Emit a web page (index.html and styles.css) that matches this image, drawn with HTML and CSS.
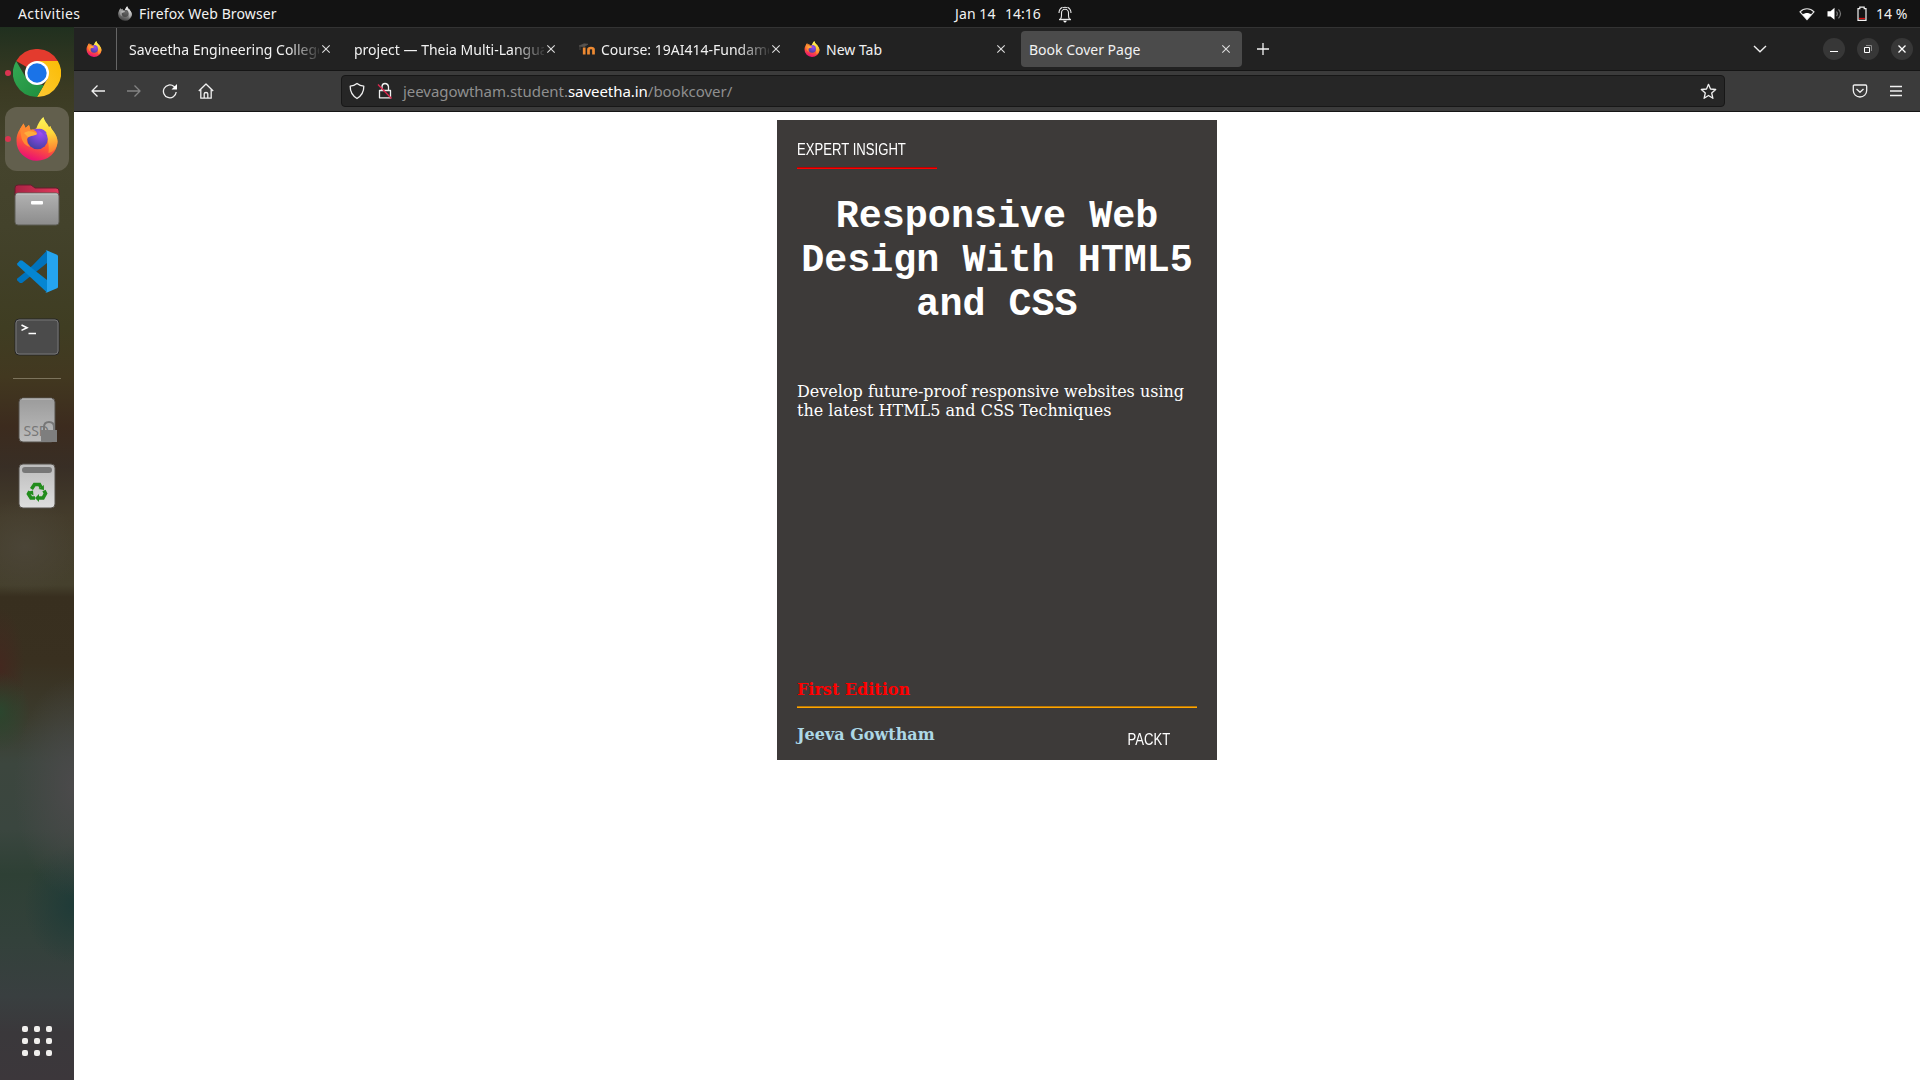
FILE: index.html
```html
<!DOCTYPE html>
<html lang="en">
<head>
<meta charset="utf-8">
<title>Book Cover Page</title>
<link rel="stylesheet" href="styles.css">
</head>
<body>
<svg class="defs" width="0" height="0" aria-hidden="true">
  <defs>
    <linearGradient id="fx-body" x1=".7" y1="0" x2=".35" y2="1"><stop offset="0" stop-color="#fff44f"/><stop offset=".3" stop-color="#ffa02e"/><stop offset=".62" stop-color="#ff5a36"/><stop offset="1" stop-color="#e90b78"/></linearGradient>
    <linearGradient id="fx-tail" x1=".5" y1="0" x2=".6" y2="1"><stop offset="0" stop-color="#fff45a"/><stop offset=".45" stop-color="#ffd83a"/><stop offset="1" stop-color="#ff7a32"/></linearGradient>
    <radialGradient id="fx-globe" cx=".65" cy=".2" r=".8"><stop offset="0" stop-color="#a04cf5"/><stop offset=".6" stop-color="#6b45c8"/><stop offset="1" stop-color="#4a41a5"/></radialGradient>
    <linearGradient id="grey" x1="0" y1="0" x2="0" y2="1"><stop offset="0" stop-color="#b2b2b2"/><stop offset="1" stop-color="#8c8c8c"/></linearGradient>
    <linearGradient id="pale" x1="0" y1="0" x2="0" y2="1"><stop offset="0" stop-color="#bcbcbc"/><stop offset="1" stop-color="#dedede"/></linearGradient>
    <linearGradient id="ssd" x1="0" y1="0" x2="0" y2="1"><stop offset="0" stop-color="#9b9b9b"/><stop offset="1" stop-color="#bdbdbd"/></linearGradient>
    <linearGradient id="red" x1="0" y1="0" x2="1" y2="0"><stop offset="0" stop-color="#a92243"/><stop offset="1" stop-color="#df3a5c"/></linearGradient>
    <linearGradient id="c-green" x1="0" y1="0" x2="1" y2="1"><stop offset="0" stop-color="#34a853"/><stop offset="1" stop-color="#1e8e3e"/></linearGradient>
    <linearGradient id="c-yellow" x1="1" y1="0" x2="0" y2="1"><stop offset="0" stop-color="#fbbc04"/><stop offset="1" stop-color="#fcc934"/></linearGradient>
    <symbol id="firefox" viewBox="0 0 42 44">
      <path d="M4 12 7.500 6.500l2 4.500 3.500-3 1.500 5 8-2 5-10.500c1 5 4 6 5 10l2-1c0 3 7 8 7 15A20.500 19.500 0 0 1 .5 24C.4 19 1.500 16 4 12z" fill="url(#fx-body)"/>
      <path d="M27.500 0c1 5 4 6 5.500 10l1.500-1c0 3 7 8 7 15.500 0 6-4 10.500-9 11.500 1-9-1-17-6-20-3-1-5.500-1-7-1 1-5 4-12 8-15z" fill="url(#fx-tail)"/>
      <circle cx="21.500" cy="22" r="10.300" fill="url(#fx-globe)"/>
      <path d="M4 12 7.500 6.500l2 4.500 3.500-3 1.500 5c3-.8 6.500 1 6.500 4-2 1.500-7 1.500-9.500 4-2 4 1 7 3 9-5-1-8-5-9-9z" fill="#ff8a33"/>
      <path d="M8 16c4-3 10-2 13 .8-1.500 2-6 1.800-9 3.200z" fill="#ffad3d"/>
      <path d="M20 12.500c4-2 9 0 11 4l-3-.5c2 2 3 4 3 7-2-5-6-9-11-10.500z" fill="#7f4bdf"/>
    </symbol>
    <symbol id="close" viewBox="0 0 10 10"><path d="M1.300 1.300l7.400 7.400M8.700 1.300l-7.400 7.400" fill="none" stroke="currentColor" stroke-width="1.100"/></symbol>
  </defs>
</svg>

<header class="panel">
  <div class="panel-left">
    <span class="activities">Activities</span>
    <svg class="mono-fox" width="14" height="15"><use href="#firefox"/></svg>
    <span class="app-name">Firefox Web Browser</span>
  </div>
  <div class="panel-clock">
    <span class="date">Jan 14</span><span class="time">14:16</span>
    <svg width="14" height="18" viewBox="0 0 14 18" fill="none" stroke="#e8e8e8" stroke-width="1.100"><path d="M1 14.500h12" stroke-width="1.400"/><path d="M2.500 14q1-1.500 1-3.500V8a3.500 3.700 0 0 1 7 0v2.500q0 2 1 3.500"/><path d="M1 8Q1 4 4.500 2.300M13 8Q13 4 9.500 2.300M5 2.700q2-1 4 0"/><path d="M5 15.800h4L7.500 17.500h-1z" fill="#fff" stroke="none"/></svg>
  </div>
  <div class="panel-status">
    <svg width="16" height="14" viewBox="0 0 16 14"><path d="M1 4.800C5 .7 11 .7 15 4.800L8 12.500z" fill="none" stroke="#e5e5e5" stroke-width="1.200"/><path d="M3.700 7.400c2.500-2 6.100-2 8.600 0L8 12.500z" fill="#fff"/></svg>
    <svg width="16" height="14" viewBox="0 0 16 14"><path d="M.5 4.200h3L7.500.8v12L3.500 9.500h-3z" fill="#fff"/><path d="M9.500 4.500q1.700 2.300 0 4.700M11.500 2.300q4 4.500 0 9" fill="none" stroke="#777" stroke-width="1.200"/></svg>
    <svg width="10" height="16" viewBox="0 0 10 16"><path d="M1 2.700h1.800V1.100h4.400v1.600H9v11.600H1z" fill="none" stroke="#f2f2f2" stroke-width="1.200"/><path d="M2 12.500h6" stroke="#d80b0b" stroke-width="1.300"/></svg>
    <span class="percent">14 %</span>
  </div>
</header>

<div class="desktop">
  <nav class="dock">
    <div class="slot running">
      <svg width="48" height="48" viewBox="0 0 48 48"><path d="M24 24 3.200 12A24 24 0 0 1 44.800 12z" fill="#e33b2e"/><path d="M24 24V12h20.800A24 24 0 0 1 24 48l10.400-18z" fill="url(#c-yellow)"/><path d="M3.200 12 13.600 30 24 36h6.900L24 48A24 24 0 0 1 3.200 12z" fill="url(#c-green)"/><circle cx="24" cy="24" r="12" fill="#fff"/><circle cx="24" cy="24" r="9.700" fill="#1a73e8"/></svg>
    </div>
    <div class="slot running active"><svg width="42" height="44"><use href="#firefox"/></svg></div>
    <div class="slot">
      <svg width="46" height="44" viewBox="0 0 46 44"><path d="M1 17V5q0-3 3-3h13l4 3h21q3 0 3 3v9z" fill="url(#red)" stroke="#641d2d"/><rect x="1" y="10" width="44" height="32" rx="3" fill="url(#grey)" stroke="#5d5d55"/><path d="M2.500 11h41" stroke="#c9c9c9"/><rect x="17" y="18" width="12" height="3.500" rx="1" fill="#fff"/></svg>
    </div>
    <div class="slot">
      <svg width="42" height="43" viewBox="0 0 42 43"><path d="M31 .5 17 15l-7 6.500L1 28.800v1.400l3 2.800h2L31 13z" fill="#0073bd"/><path d="M1.200 13.500 4 10.500h2.200L31 30v12.500L1.200 15z" fill="#0586d2"/><path d="M31 .5 41 4.700q1 .5 1 1.500v30.600q0 1-1 1.500l-10 4.200q-1.200.4-2-.5 2 1 2-1.500V2.500Q31 0 29 1q.8-.9 2-.5z" fill="#25a4ef"/></svg>
    </div>
    <div class="slot">
      <svg width="46" height="38" viewBox="0 0 46 38"><rect x="1" y="1" width="44" height="36" rx="4" fill="#4b4b4b" stroke="#272727"/><rect x="2" y="2" width="42" height="34" rx="3" fill="none" stroke="#777"/><path d="M7.500 7l5.500 2.700-5.500 2.700M14.500 15.500H22" fill="none" stroke="#fff" stroke-width="1.600"/></svg>
    </div>
    <hr class="dock-line">
    <div class="slot">
      <svg width="40" height="46" viewBox="-2 0 40 46"><rect x="0" y="1" width="36" height="44" rx="4" fill="url(#ssd)" stroke="#55504a"/><path d="M3 2h30" stroke="#c4c4c4"/><text x="4.500" y="39" class="ssd-label">SSD</text><path d="M25 34v-4q0-5 5-5t5 5v4" fill="none" stroke="#777" stroke-width="2"/><path d="M22 33h16v12H22z" fill="#7e7e7e"/></svg>
    </div>
    <div class="slot">
      <svg width="38" height="46" viewBox="0 0 38 46"><rect x="1" y="1" width="36" height="44" rx="4" fill="url(#pale)" stroke="#55504a"/><rect x="4" y="4" width="30" height="6" rx="3" fill="#777"/><g fill="none" stroke="#228c1c" stroke-width="3.600"><path d="M13.500 26l3-4.500h5l1.500 2.800"/><path d="M26 27.500l1.500 3-2.500 4.500h-5"/><path d="M17 35h-4l-2.500-4 1.500-2.500"/></g><path d="M20.500 26l5.500 1-.2-5zM21 31v8l-4-4zM9 29l6-1.500.5 5z" fill="#228c1c"/></svg>
    </div>
    <div class="apps"><i></i><i></i><i></i><i></i><i></i><i></i><i></i><i></i><i></i></div>
  </nav>

  <main class="browser">
    <div class="tabstrip">
      <div class="pinned"><svg width="16" height="16"><use href="#firefox"/></svg></div>
      <div class="tab"><span class="label fade">Saveetha Engineering College</span><svg class="x"><use href="#close"/></svg></div>
      <div class="tab"><span class="label fade">project — Theia Multi-Language</span><svg class="x"><use href="#close"/></svg></div>
      <div class="tab"><svg class="favicon" width="16" height="16" viewBox="0 0 16 16"><path d="M5.200 13.500V6.500M9.500 13.500V8.500q0-1.500 2.500-1.500t2.500 1.500v5" fill="none" stroke="#ee8a32" stroke-width="2.700"/><path d="M0 5l5-2.200 4 .4-4 2.600zM1 5v4" fill="#575350" stroke="#575350" stroke-width=".7"/></svg><span class="label fade">Course: 19AI414-Fundamentals</span><svg class="x"><use href="#close"/></svg></div>
      <div class="tab"><svg class="favicon" width="16" height="16"><use href="#firefox"/></svg><span class="label">New Tab</span><svg class="x"><use href="#close"/></svg></div>
      <div class="tab selected"><span class="label">Book Cover Page</span><svg class="x"><use href="#close"/></svg></div>
      <svg class="plus" width="12" height="12" viewBox="0 0 12 12"><path d="M6 0v12M0 6h12" stroke="#f4f4f4" stroke-width="1.300"/></svg>
      <svg class="chevron" width="14" height="8" viewBox="0 0 14 8"><path d="M1 1l6 5.800L13 1" fill="none" stroke="#eee" stroke-width="1.400"/></svg>
      <div class="controls">
        <span><svg width="10" height="10"><path d="M1 7.500h8" stroke="#fff"/></svg></span>
        <span><svg width="10" height="10"><path d="M1.500 3.500h5v5h-5z" fill="none" stroke="#fff"/><path d="M3 1.500h5.500V7" fill="none" stroke="#888"/></svg></span>
        <span><svg width="10" height="10"><path d="M1.500 1.500l7 7M8.500 1.500l-7 7" stroke="#fff" stroke-width="1.300"/></svg></span>
      </div>
    </div>

    <div class="toolbar">
      <div class="nav-buttons">
        <svg width="16" height="16" viewBox="0 0 16 16"><path d="M15 8H2M7.500 2.500 2 8l5.500 5.500"/></svg>
        <svg class="off" width="16" height="16" viewBox="0 0 16 16"><path d="M1 8h13M8.500 2.500 14 8l-5.500 5.500"/></svg>
        <svg width="16" height="16" viewBox="0 0 16 16"><path d="M14.200 9A6.400 6.400 0 1 1 12 3.500L13 4.500"/><path d="M15 1v5.500H9.500z" fill="#fff" stroke="none"/></svg>
        <svg width="16" height="16" viewBox="0 0 16 16"><path d="M.8 8 8 1l7.200 7M2.800 6.500v8.700h10.400V6.500M6.200 15v-4.200q0-1.300 1.800-1.300t1.800 1.300V15"/></svg>
      </div>
      <div class="urlbar">
        <svg class="shield" width="16" height="18" viewBox="0 0 16 18"><path d="M8 1.500Q11 4 14.800 4.200 15 12 8 16.500 1 12 1.200 4.200 5 4 8 1.500z"/></svg>
        <svg class="lock" width="16" height="18" viewBox="0 0 16 18"><path d="M2.500 8.500h11v7.300h-11zM5 8.500V4.700q0-3.200 3-3.200t3.500 3.200v3.800"/><path d="M1 2.500 14.500 16.500" class="strike"/></svg>
        <span class="url"><span>jeevagowtham.student.</span><b>saveetha.in</b><span>/bookcover/</span></span>
        <svg class="star" width="17" height="17" viewBox="0 0 17 17"><path d="M8.500 1.300l2 4.700 5.200.5-4 3.500 1.200 5.300-4.400-2.800-4.400 2.800L5.300 10l-4-3.500L6.500 6z"/></svg>
      </div>
      <div class="tools">
        <svg width="16" height="16" viewBox="0 0 16 16"><path d="M2.500 2h11q1.200 0 1.200 1.200V7.500a6.700 6.500 0 0 1-13.400 0V3.200Q1.300 2 2.500 2zM4.500 6 8 9.300 11.500 6"/></svg>
        <svg width="14" height="12" viewBox="0 0 14 12"><path d="M1 1.500h12M1 6h12M1 10.500h12"/></svg>
      </div>
    </div>

    <section class="page">
      <article class="cover">
        <div class="series"><span class="narrow">EXPERT INSIGHT</span></div>
        <hr class="red-rule">
        <h1>Responsive Web Design With HTML5 and CSS</h1>
        <p class="tagline">Develop future-proof responsive websites using the latest HTML5 and CSS Techniques</p>
        <div class="edition">First Edition</div>
        <hr class="orange-rule">
        <footer class="credits"><span class="author">Jeeva Gowtham</span><span class="narrow publisher">PACKT</span></footer>
      </article>
    </section>
  </main>
</div>
</body>
</html>
```
FILE: styles.css
```css
* { box-sizing: border-box; }
body {
  margin: 0;
  width: 1920px;
  height: 1080px;
  overflow: hidden;
  display: flex;
  flex-direction: column;
  background: #fff;
  color: #f2f2f2;
  font: 14px/20px "Noto Sans", "Open Sans", sans-serif;
  white-space: nowrap;
}
svg { display: block; flex: none; }
.defs { position: absolute; }

.panel {
  height: 27px;
  flex: none;
  display: grid;
  grid-template-columns: 955px 1fr auto;
  align-items: center;
  background: #131313;
}
.panel-left { display: flex; align-items: center; padding-left: 18px; }
.activities { width: 100px; letter-spacing: .4px; }
.mono-fox { filter: grayscale(1); margin-right: 7px; }
.app-name { letter-spacing: .12px; }
.panel-clock { display: flex; align-items: center; }
.date { width: 50px; letter-spacing: .1px; }
.time { width: 53px; }
.panel-status { display: flex; align-items: center; padding-right: 12px; }
.panel-status svg:nth-child(1) { margin-right: 12px; }
.panel-status svg:nth-child(2) { margin-right: 14px; }
.percent { width: 32px; margin-left: 9px; }

.desktop { flex: 1; display: flex; min-height: 0; }
.dock {
  width: 74px;
  flex: none;
  display: flex;
  flex-direction: column;
  align-items: center;
  gap: 2px;
  padding: 14px 0 24px;
  background:
    radial-gradient(ellipse 60px 110px at 74px 760px, #4b4a4b, transparent),
    radial-gradient(ellipse 50px 60px at 74px 878px, #1f3b38, transparent),
    radial-gradient(ellipse 30px 40px at 0 685px, #2b462e, transparent),
    radial-gradient(ellipse 55px 48px at 25px 520px, #4b4537, transparent),
    radial-gradient(ellipse 25px 60px at 0 640px, #43281f, transparent),
    linear-gradient(#20301f 0, #3a3a22 60px, #45442d 130px, #43422b 200px, #3f3d22 300px, #423820 350px, #3c2b1e 400px, #382e25 440px, #443c2b 490px, #45402d 558px, #382f1f 570px, #393020 636px, #3b3b2d 690px, #3c463e 736px, #3a463f 803px, #2e4035 847px, #33413b 914px, #393f40 969px, #3a383b 1005px, #3c373b 1053px);
}
.slot {
  width: 64px;
  height: 64px;
  flex: none;
  display: flex;
  align-items: center;
  justify-content: center;
  position: relative;
  border-radius: 12px;
}
.slot.active { background: #625f4d; }
.running::before {
  content: "";
  position: absolute;
  left: 0;
  top: 29px;
  width: 6px;
  height: 6px;
  border-radius: 50%;
  background: #da3450;
}
.dock-line { width: 48px; height: 1px; margin: 7px 0; border: 0; flex: none; background: #7c735c; }
.ssd-label { font: 14px "Noto Sans", sans-serif; fill: #777; }
.apps {
  margin-top: auto;
  display: grid;
  grid-template-columns: repeat(3, 6px);
  gap: 6px;
}
.apps i { height: 6px; border-radius: 2px; background: #f0efed; }

.browser { flex: 1; display: flex; flex-direction: column; min-width: 0; }
.tabstrip {
  height: 44px;
  flex: none;
  display: flex;
  align-items: center;
  gap: 4px;
  padding-right: 7px;
  background: #222;
  border-top: 1px solid #333;
  border-bottom: 1px solid #151515;
}
.pinned {
  width: 43px;
  height: 100%;
  display: flex;
  align-items: center;
  padding-left: 12px;
  border-right: 1px solid #666;
}
.tab {
  width: 221px;
  height: 36px;
  display: flex;
  align-items: center;
  padding: 0 11px 0 8px;
  border-radius: 4px;
}
.selected { background: #4b4b4b; }
.favicon { margin-right: 6px; }
.label { flex: 1; min-width: 0; overflow: hidden; padding-top: 1px; }
.fade { -webkit-mask-image: linear-gradient(90deg, #000 calc(100% - 32px), transparent calc(100% + 4px)); mask-image: linear-gradient(90deg, #000 calc(100% - 32px), transparent calc(100% + 4px)); }
.x { width: 10px; height: 10px; margin-left: 2px; color: #ddd; }
.plus { margin-left: 11px; }
.chevron { margin-left: 480px; }
.controls { display: flex; gap: 12px; margin-left: auto; }
.controls span {
  width: 22px;
  height: 22px;
  display: flex;
  align-items: center;
  justify-content: center;
  border-radius: 50%;
  background: #373737;
}

.toolbar {
  height: 41px;
  flex: none;
  display: flex;
  align-items: center;
  background: #3b3b3b;
  border-bottom: 1px solid #151515;
}
.toolbar path { fill: none; stroke: #f0f0f0; stroke-width: 1.3; stroke-linejoin: round; }
.toolbar path[fill="#fff"] { fill: #fff; stroke: none; }
.nav-buttons { width: 267px; display: flex; gap: 20px; padding-left: 16px; }
.off { opacity: .4; }
.urlbar {
  width: 1384px;
  height: 32px;
  display: flex;
  align-items: center;
  padding: 0 7px;
  background: #262626;
  border: 1px solid #171717;
  border-radius: 4px;
}
.lock { margin: 0 10px 0 12px; }
.toolbar .strike { stroke: #e22850; }
.url { display: flex; font-size: 15px; letter-spacing: -.04px; color: #8f8f8f; }
.url b { font-weight: 400; color: #fff; }
.star { margin-left: auto; }
.tools { display: flex; align-items: center; gap: 21px; margin-left: auto; padding-right: 17px; }

.page { flex: 1; padding: 8px; background: #fff; }
.cover {
  width: 440px;
  height: 640px;
  margin: 0 auto;
  padding: 20px;
  background: #3d3a39;
  color: #fff;
  font: 16px/19px "DejaVu Serif", serif;
  white-space: normal;
}
.narrow {
  display: inline-block;
  font-family: "Liberation Sans", sans-serif;
  transform: scaleX(.82);
  transform-origin: left;
}
.cover hr { border: 0; height: 2px; }
.series { height: 19px; }
.red-rule { width: 140px; margin: 8px 0 0; background: linear-gradient(#b10404 50%, #f00 50%); }
h1 {
  margin: 26px 0 0;
  font: 700 38.4px/44px "Liberation Mono", monospace;
  text-align: center;
}
.tagline { margin: 55px 0 0; }
.edition { margin-top: 260px; color: #f00; font-weight: 700; }
.orange-rule { margin: 7px 0 0; background: linear-gradient(#b87808 50%, #ffa500 50%); }
.credits { display: flex; justify-content: space-between; padding: 17px 27px 0 0; }
.author { color: #add8e6; font-weight: 700; }
.publisher { padding-top: 5px; transform-origin: right; }
```
